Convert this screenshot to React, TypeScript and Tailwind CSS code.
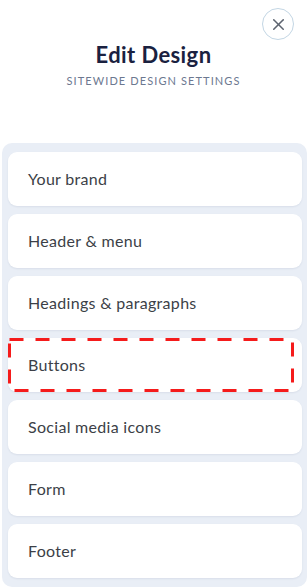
import { X } from 'lucide-react';

const sections = [
  'Your brand',
  'Header & menu',
  'Headings & paragraphs',
  'Buttons',
  'Social media icons',
  'Form',
  'Footer',
];

function HighlightBox() {
  return (
    <svg className="pointer-events-none absolute left-0 top-0 h-full w-[286px]" viewBox="0 0 286 54" preserveAspectRatio="none">
      <rect x="1.5" y="1.5" width="283" height="51" fill="none" stroke="#f51b1b" strokeWidth="3" strokeDasharray="14 12" />
    </svg>
  );
}

export default function App() {
  return (
    <div className="min-h-[588px] w-[307px] overflow-hidden bg-white font-['Lato',sans-serif]">
      <div className="relative h-[143px]">
        <button className="absolute right-[13px] top-[8px] flex h-[32px] w-[32px] items-center justify-center rounded-full border border-[#c3d6e4] bg-white text-[#5d6470]">
          <X className="h-[19px] w-[19px]" strokeWidth={1.9} />
        </button>
        <div className="flex flex-col items-center pt-[40px]">
          <h1 className="text-[22px] font-bold leading-[29px] tracking-[0.4px] text-[#1a2140]">Edit Design</h1>
          <p className="mt-[4px] text-[11px] leading-[16px] tracking-[1.1px] text-[#6c7890]">SITEWIDE DESIGN SETTINGS</p>
        </div>
      </div>

      <div className="ml-[2px] flex flex-col gap-[8px] rounded-[10px] bg-[#e9eef6] pb-[9px] pl-[6px] pr-[5px] pt-[9px]">
        {sections.map((s) => (
          <div
            key={s}
            className="relative flex h-[54px] items-center rounded-[9px] bg-white pl-[20px] text-[16px] tracking-[0.3px] text-[#3c3f47] shadow-[0_1px_2px_rgba(30,50,90,0.08)]"
          >
            {s}
            {s === 'Buttons' && <HighlightBox />}
          </div>
        ))}
      </div>
    </div>
  );
}
